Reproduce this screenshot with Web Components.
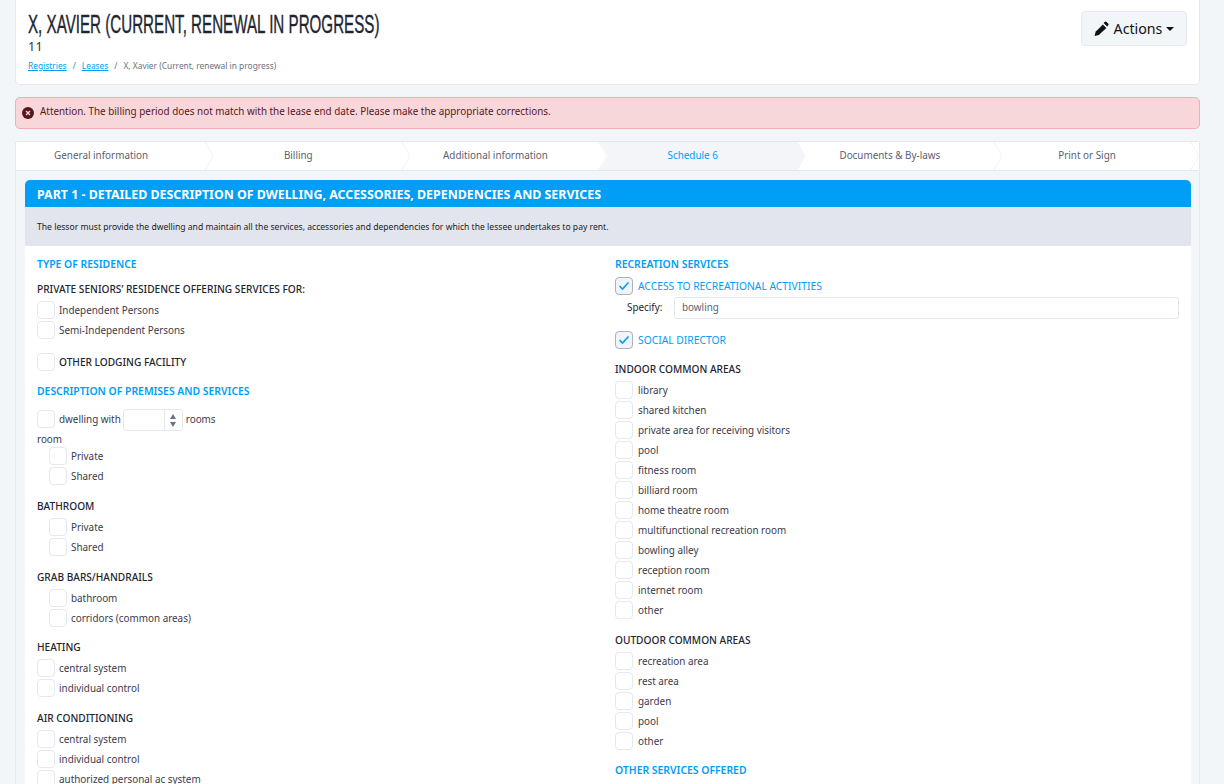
<!DOCTYPE html>
<html lang="en"><head><meta charset="utf-8"><title>Lease</title>
<style>
html,body{margin:0;height:784px;overflow:hidden;background:#f3f6f9}
body{font:9.9px/20px "Noto Sans","Open Sans",sans-serif;color:#3a3a4a}
app-shell{display:block}
</style></head><body>
<app-shell>
  <page-header slot="top" title="X, Xavier (Current, renewal in progress)" code="11"></page-header>
  <alert-box>Attention. The billing period does not match with the lease end date. Please make the appropriate corrections.</alert-box>
  <wizard-card>
    <step-bar></step-bar>
    <part-card heading="PART 1 - DETAILED DESCRIPTION OF DWELLING, ACCESSORIES, DEPENDENCIES AND SERVICES" intro="The lessor must provide the dwelling and maintain all the services, accessories and dependencies for which the lessee undertakes to pay rent.">
      <div slot="left">
        <sect-title kind="blue">TYPE OF RESIDENCE</sect-title>
        <sect-title gap="5">PRIVATE SENIORS’ RESIDENCE OFFERING SERVICES FOR:</sect-title>
        <check-row gap="1">Independent Persons</check-row>
        <check-row>Semi-Independent Persons</check-row>
        <check-row gap="12" caps>OTHER LODGING FACILITY</check-row>
        <sect-title kind="blue" gap="9">DESCRIPTION OF PREMISES AND SERVICES</sect-title>
        <check-row gap="8">dwelling with <num-field></num-field> rooms</check-row>
        <sect-title plain>room</sect-title>
        <check-row indent gap="-3">Private</check-row>
        <check-row indent>Shared</check-row>
        <sect-title gap="10">BATHROOM</sect-title>
        <check-row indent gap="1">Private</check-row>
        <check-row indent>Shared</check-row>
        <sect-title gap="10">GRAB BARS/HANDRAILS</sect-title>
        <check-row indent gap="1">bathroom</check-row>
        <check-row indent>corridors (common areas)</check-row>
        <sect-title gap="9">HEATING</sect-title>
        <check-row gap="1">central system</check-row>
        <check-row>individual control</check-row>
        <sect-title gap="10">AIR CONDITIONING</sect-title>
        <check-row gap="1">central system</check-row>
        <check-row>individual control</check-row>
        <check-row>authorized personal ac system</check-row>
      </div>
      <div slot="right" style="--lbl:5px">
        <sect-title kind="blue">RECREATION SERVICES</sect-title>
        <check-row checked caps gap="2">ACCESS TO RECREATIONAL ACTIVITIES</check-row>
        <specify-field label="Specify:" value="bowling"></specify-field>
        <check-row checked caps gap="11">SOCIAL DIRECTOR</check-row>
        <sect-title gap="9">INDOOR COMMON AREAS</sect-title>
        <check-row gap="1">library</check-row>
        <check-row>shared kitchen</check-row>
        <check-row>private area for receiving visitors</check-row>
        <check-row>pool</check-row>
        <check-row>fitness room</check-row>
        <check-row>billiard room</check-row>
        <check-row>home theatre room</check-row>
        <check-row>multifunctional recreation room</check-row>
        <check-row>bowling alley</check-row>
        <check-row>reception room</check-row>
        <check-row>internet room</check-row>
        <check-row>other</check-row>
        <sect-title gap="10">OUTDOOR COMMON AREAS</sect-title>
        <check-row gap="1">recreation area</check-row>
        <check-row>rest area</check-row>
        <check-row>garden</check-row>
        <check-row>pool</check-row>
        <check-row>other</check-row>
        <sect-title kind="blue" gap="9">OTHER SERVICES OFFERED</sect-title>
      </div>
    </part-card>
  </wizard-card>
</app-shell>
<script>
function def(name, css, html, init){
  customElements.define(name, class extends HTMLElement{
    connectedCallback(){
      if(this.shadowRoot) return;
      const r=this.attachShadow({mode:'open'});
      r.innerHTML='<style>'+css+'</style>'+(typeof html==='function'?html(this):html);
      if(init) init(this,r);
    }
  });
}
const esc=s=>String(s||'').replace(/&/g,'&amp;');
def('app-shell',':host{display:block;padding:0 24px 0 15px}','<slot name="top"></slot><slot></slot>');
def('page-header',`
:host{display:flex;justify-content:space-between;height:85px;box-sizing:border-box;background:#fff;border:1px solid #e4e8ef;border-top:0;border-radius:0 0 5px 5px;padding:11px 12px 0 12px}
h1{margin:0;font:400 23.5px/28px "Liberation Sans",sans-serif;color:#1e2530;text-transform:uppercase;transform-origin:0 50%;transform:scale(.645,1.06);white-space:nowrap;-webkit-text-stroke:.35px #1e2530;width:352px}
.code{font:12.5px/14px "Noto Sans",sans-serif;color:#333;letter-spacing:.4px;margin-top:1px}
nav{font:8.4px/14px "Noto Sans",sans-serif;color:#6c7280;margin-top:5px;display:flex;gap:6px}
a{color:#009ef7;text-decoration:underline}
button{all:unset;box-sizing:border-box;display:flex;align-items:center;gap:5px;width:106px;height:35px;justify-content:center;background:#f3f6f9;border:1px solid #e6eaf0;border-radius:4px;font:14.2px "Noto Sans",sans-serif;color:#111}
.caret{width:0;height:0;border:4px solid transparent;border-top-color:#111;border-bottom:0;margin-left:-1px}
`,h=>`<div><h1>${esc(h.getAttribute('title'))}</h1><div class="code">${h.getAttribute('code')}</div>
<nav><a>Registries</a><span>/</span><a>Leases</a><span>/</span><span>X, Xavier (Current, renewal in progress)</span></nav></div>
<button><svg width="15" height="15" viewBox="0 0 15 15"><path d="M10.6 .9a1.4 1.4 0 0 1 2 0l1.5 1.5a1.4 1.4 0 0 1 0 2l-1 1-3.5-3.5z" fill="#111"/><path d="M8.9 3.4l3.5 3.5-7.6 7-4.2 1 1-4.2z" fill="#111"/></svg>Actions<span class="caret"></span></button>`);
def('alert-box',`
:host{display:flex;align-items:center;gap:6px;margin-top:12px;height:32px;box-sizing:border-box;width:1185px;background:#f8d7da;border:1px solid #f1aeb5;border-radius:5px;padding:0 6px 4px;color:#58151c;font:9.9px/20px "Noto Sans",sans-serif}
svg{flex:none;margin-top:3px}`,`<svg width="12" height="12" viewBox="0 0 12 12"><circle cx="6" cy="6" r="6" fill="#58151c"/><path d="M4 4l4 4M8 4l-4 4" stroke="#f8d7da" stroke-width="1.4"/></svg><span><slot></slot></span>`);
def('wizard-card',`:host{display:block;margin-top:12px;width:1185px;box-sizing:border-box;border:1px solid #e4e8ef;border-bottom:0;border-radius:3px 3px 0 0;height:700px}`,'<slot></slot>');
const steps=['General information','Billing','Additional information','Schedule 6','Documents & By-laws','Print or Sign'];
def('step-bar',`
:host{display:grid;grid-template-columns:repeat(6,197.2px);height:28px;background:#fff;border-bottom:1px solid #e4e8ef;font:9.9px/26px "Noto Sans",sans-serif;color:#5b6070}
.s{position:relative;text-align:center;padding-right:27px;box-sizing:border-box}
.s svg{position:absolute;left:0;top:0;overflow:visible}
.s span{position:relative}
.on{color:#009ef7}`,
()=>steps.map((t,i)=>`<div class="s${i==3?' on':''}"><svg width="197" height="28">${i==3?'<polygon points="-8,0 189,0 197,14 189,28 -8,28 0,14" fill="#f3f5f9"/>':''}<polyline points="189,0 197,14 189,28" fill="none" stroke="#f1f3f6"/></svg><span>${esc(t)}</span></div>`).join(''));
def('part-card',`
:host{display:block;margin:9px 8px 0 9px;background:#fff;border-radius:5px 5px 0 0}
.h{background:#009ef7;color:#fff;font:700 12.4px/29px "Noto Sans",sans-serif;padding:0 12px;height:27px;border-radius:5px 5px 0 0}
.i{background:#e2e5ee;color:#222;font:8.6px/40px "Noto Sans",sans-serif;padding:0 12px;height:39px}
.g{display:grid;grid-template-columns:1fr 1fr;column-gap:14px;padding:8px 12px 0}`,
h=>`<div class="h">${esc(h.getAttribute('heading'))}</div><div class="i">${esc(h.getAttribute('intro'))}</div><div class="g"><slot name="left"></slot><slot name="right"></slot></div>`);
def('sect-title',`
:host{display:block;height:20px;font:500 10.15px/20px "Noto Sans",sans-serif;color:#1e2530}
:host([kind=blue]){color:#009ef7;font-weight:600;font-size:10.4px}
:host([plain]){color:#3a3a4a;font-weight:400;font-size:9.9px}`,'<slot></slot>',h=>{h.style.marginTop=(h.getAttribute('gap')||0)+'px'});
def('check-row',`
:host{display:flex;align-items:center;height:20px;font:9.9px/20px "Noto Sans",sans-serif;color:#3a3a4a;white-space:nowrap}
:host([indent]){padding-left:12px}
:host([caps]){color:#1e2530;font-size:10.15px;font-weight:500}
:host([caps][checked]){color:#009ef7;font-size:10.3px;font-weight:400}
.b{flex:none;box-sizing:border-box;width:18px;height:18px;border:1px solid #e4e8ef;border-radius:4px;margin-right:var(--lbl,4px);background:#fff;display:flex;align-items:center;justify-content:center}
:host([checked]) .b{background:#f0f3f8;border-color:#aab1c0}
span{display:flex;align-items:center;gap:3px}`,
h=>`<div class="b">${h.hasAttribute('checked')?'<svg width="12" height="10" viewBox="0 0 12 10"><path d="M1.5 5l3 3 6-6.5" fill="none" stroke="#009ef7" stroke-width="1.6"/></svg>':''}</div><span><slot></slot></span>`,
h=>{h.style.marginTop=(h.getAttribute('gap')||0)+'px'});
def('num-field',`
:host{display:inline-flex;box-sizing:border-box;width:60px;height:22px;border:1px solid #e4e8ef;border-radius:3px;background:#fff;justify-content:flex-end;margin:0 0 -2px -1px}
.sp{width:17px;border-left:1px solid #e4e8ef;display:flex;flex-direction:column;align-items:center;justify-content:center;gap:3px}
i{width:0;height:0;border:3.5px solid transparent}
.u{border-bottom:5px solid #6c7280;border-top:0}.d{border-top:5px solid #6c7280;border-bottom:0}`,'<div class="sp"><i class="u"></i><i class="d"></i></div>');
def('specify-field',`
:host{display:flex;align-items:center;height:22px;margin-top:1px;padding-left:12px;font:9.9px/18px "Noto Sans",sans-serif;color:#1e2530}
label{width:47px;margin-top:-2px}
.f{flex:1;box-sizing:border-box;height:22px;border:1px solid #e4e8ef;border-radius:3px;padding:0 7px;color:#5b6070;line-height:18px}`,
h=>`<label>${h.getAttribute('label')}</label><div class="f">${h.getAttribute('value')}</div>`);
</script>
</body></html>
